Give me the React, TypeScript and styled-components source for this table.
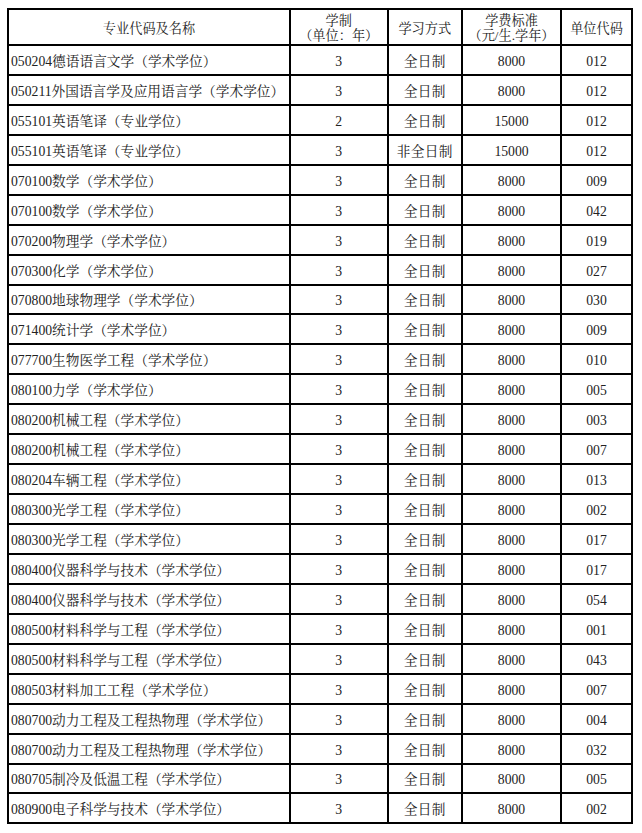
import React from 'react';
import styled, { createGlobalStyle } from 'styled-components';

const GlobalStyle = createGlobalStyle`
  body {
    margin: 0;
    background: #fff;
  }
`;

const Page = styled.div`
  padding: 8px 0 0 7px;
`;

const Table = styled.table`
  width: 626px;
  table-layout: fixed;
  border-collapse: collapse;
  border: 2px solid #000;
  font-family: 'Liberation Serif', 'Noto Serif CJK SC', 'Noto Sans CJK SC', serif;
  font-size: 13.7px;
  color: #222;
`;

const HeadRow = styled.tr`
  height: 36px;
`;

const Row = styled.tr`
  height: 29.95px;
`;

const Cell = styled.td<{ $left?: boolean }>`
  border: 2px solid #000;
  padding: 3px ${({ $left }) => ($left ? '2px' : '0')} 0;
  text-align: ${({ $left }) => ($left ? 'left' : 'center')};
  vertical-align: middle;
  white-space: nowrap;
  line-height: 15px;
`;

const HeadCell = styled(Cell).attrs({ as: 'th' })`
  font-weight: normal;
  font-size: 13.2px;
  padding-top: 2px;
`;

const Mode = styled.span`
  letter-spacing: 0.3px;
`;

type Item = [string, string, string, string, string];

const rows: Item[] = [
  ['050204德语语言文学（学术学位）', '3', '全日制', '8000', '012'],
  ['050211外国语言学及应用语言学（学术学位）', '3', '全日制', '8000', '012'],
  ['055101英语笔译（专业学位）', '2', '全日制', '15000', '012'],
  ['055101英语笔译（专业学位）', '3', '非全日制', '15000', '012'],
  ['070100数学（学术学位）', '3', '全日制', '8000', '009'],
  ['070100数学（学术学位）', '3', '全日制', '8000', '042'],
  ['070200物理学（学术学位）', '3', '全日制', '8000', '019'],
  ['070300化学（学术学位）', '3', '全日制', '8000', '027'],
  ['070800地球物理学（学术学位）', '3', '全日制', '8000', '030'],
  ['071400统计学（学术学位）', '3', '全日制', '8000', '009'],
  ['077700生物医学工程（学术学位）', '3', '全日制', '8000', '010'],
  ['080100力学（学术学位）', '3', '全日制', '8000', '005'],
  ['080200机械工程（学术学位）', '3', '全日制', '8000', '003'],
  ['080200机械工程（学术学位）', '3', '全日制', '8000', '007'],
  ['080204车辆工程（学术学位）', '3', '全日制', '8000', '013'],
  ['080300光学工程（学术学位）', '3', '全日制', '8000', '002'],
  ['080300光学工程（学术学位）', '3', '全日制', '8000', '017'],
  ['080400仪器科学与技术（学术学位）', '3', '全日制', '8000', '017'],
  ['080400仪器科学与技术（学术学位）', '3', '全日制', '8000', '054'],
  ['080500材料科学与工程（学术学位）', '3', '全日制', '8000', '001'],
  ['080500材料科学与工程（学术学位）', '3', '全日制', '8000', '043'],
  ['080503材料加工工程（学术学位）', '3', '全日制', '8000', '007'],
  ['080700动力工程及工程热物理（学术学位）', '3', '全日制', '8000', '004'],
  ['080700动力工程及工程热物理（学术学位）', '3', '全日制', '8000', '032'],
  ['080705制冷及低温工程（学术学位）', '3', '全日制', '8000', '005'],
  ['080900电子科学与技术（学术学位）', '3', '全日制', '8000', '002'],
];

const App: React.FC = () => (
  <Page>
    <GlobalStyle />
    <Table>
      <colgroup>
        <col style={{ width: 282 }} />
        <col style={{ width: 97.5 }} />
        <col style={{ width: 74.5 }} />
        <col style={{ width: 99 }} />
        <col style={{ width: 71 }} />
      </colgroup>
      <thead>
        <HeadRow>
          <HeadCell>专业代码及名称</HeadCell>
          <HeadCell>
            学制
            <br />
            （单位：年）
          </HeadCell>
          <HeadCell>学习方式</HeadCell>
          <HeadCell>
            学费标准
            <br />
            （元/生.学年）
          </HeadCell>
          <HeadCell>单位代码</HeadCell>
        </HeadRow>
      </thead>
      <tbody>
        {rows.map(([name, years, mode, fee, code], i) => (
          <Row key={i}>
            <Cell $left>{name}</Cell>
            <Cell>{years}</Cell>
            <Cell>
              <Mode>{mode}</Mode>
            </Cell>
            <Cell>{fee}</Cell>
            <Cell>{code}</Cell>
          </Row>
        ))}
      </tbody>
    </Table>
  </Page>
);

export default App;
